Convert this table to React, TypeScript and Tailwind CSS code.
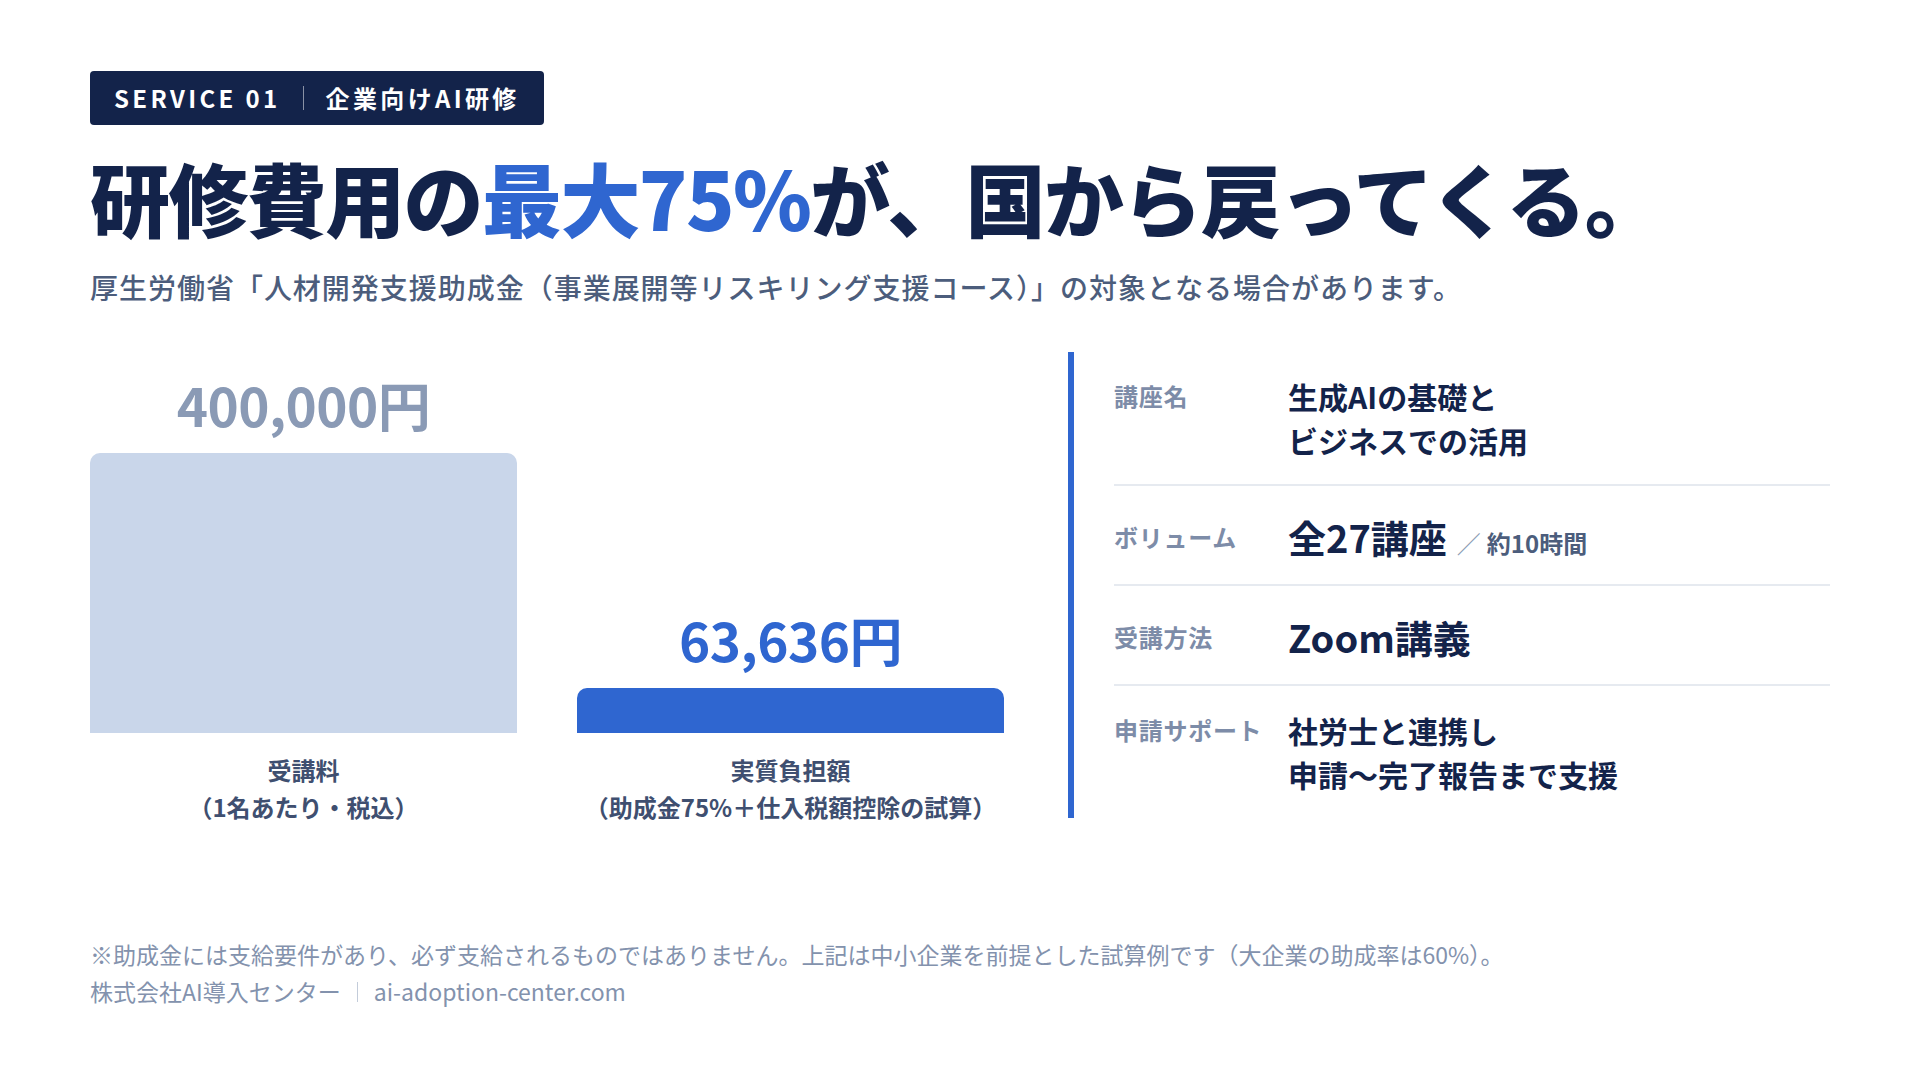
const font = { fontFamily: '"Noto Sans CJK JP", "Noto Sans", sans-serif' };

const rows = [
  { label: '講座名', big: false, value: <>生成AIの基礎と<br />ビジネスでの活用</> },
  {
    label: 'ボリューム',
    big: true,
    value: (
      <>
        全27講座
        <span className="ml-[10px] mr-[6px] text-[24px] leading-none font-normal text-[#8a99b3]">／</span>
        <span className="text-[24px] leading-none text-[#4c5d7c]">約10時間</span>
      </>
    ),
  },
  { label: '受講方法', big: true, value: <>Zoom講義</> },
  { label: '申請サポート', big: false, value: <>社労士と連携し<br />申請〜完了報告まで支援</> },
];

function Bar({ amount, amountClass, barClass, height, label, sub }: {
  amount: string; amountClass: string; barClass: string; height: string; label: string; sub: string;
}) {
  return (
    <div className="flex w-[427px] flex-col items-center">
      <div className={`mb-4 text-[53px] font-bold leading-[1.2] tracking-[-0.01em] ${amountClass}`}>{amount}</div>
      <div className={`w-full rounded-t-[10px] ${barClass} ${height}`} />
      <div className="mt-[18px] text-center text-[24px] font-bold leading-[37px] text-[#3f4f70]">
        <div>{label}</div>
        <div>{sub}</div>
      </div>
    </div>
  );
}

export default function App() {
  return (
    <div style={font} className="flex min-h-screen flex-col bg-white px-[90px] pt-[71px] pb-[70px] text-[#13234a]">
      <div className="flex h-[54px] w-fit items-center rounded-[4px] bg-[#13234a] px-[24px] text-[24px] font-bold tracking-[0.14em] text-white">
        <span>SERVICE 01</span>
        <span className="mx-[22px] h-[24px] w-px bg-white/50" />
        <span>企業向けAI研修</span>
      </div>

      <h1 className="mt-[21px] text-[80px] font-black leading-[100px] tracking-[-0.02em]">
        研修費用の<span className="text-[#2f66d0]">最大75%</span>が、国から戻ってくる。
      </h1>
      <p className="mt-[20px] text-[28px] font-medium leading-[42px] tracking-[0.035em] text-[#4c5d7c]">
        厚生労働省「人材開発支援助成金（事業展開等リスキリング支援コース）」の対象となる場合があります。
      </p>

      <div className="mt-[44px] flex items-start gap-[64px]">
        <div className="flex w-[914px] shrink-0 items-end gap-[60px] pt-[21px]">
          <Bar amount="400,000円" amountClass="text-[#8a9ab5]" barClass="bg-[#c9d6ea]" height="h-[280px]" label="受講料" sub="（1名あたり・税込）" />
          <Bar amount="63,636円" amountClass="text-[#2f66d0]" barClass="bg-[#2f66d0]" height="h-[45px]" label="実質負担額" sub="（助成金75%＋仕入税額控除の試算）" />
        </div>

        <div className="flex-1 border-l-[6px] border-[#2f66d0] pl-[40px]">
          {rows.map((r, i) => (
            <div
              key={r.label}
              className={`flex items-start ${r.big ? 'pt-[24px] pb-[20px]' : 'py-[22px]'} ${i < rows.length - 1 ? 'border-b-2 border-[#e6eaf0]' : ''}`}
            >
              <div className={`w-[174px] shrink-0 text-[24px] font-bold tracking-[0.03em] text-[#7d8ca8] ${r.big ? 'leading-[54px]' : 'leading-[44px]'}`}>
                {r.label}
              </div>
              <div className={`font-bold ${r.big ? 'text-[38px] leading-[54px]' : 'text-[30px] leading-[44px]'}`}>{r.value}</div>
            </div>
          ))}
        </div>
      </div>

      <div className="mt-auto text-[23px] leading-[37px] text-[#8392ad]">
        <p>※助成金には支給要件があり、必ず支給されるものではありません。上記は中小企業を前提とした試算例です（大企業の助成率は60%）。</p>
        <p className="flex items-center">
          株式会社AI導入センター
          <span className="mx-[16px] h-[20px] w-px bg-[#c3ccda]" />
          ai-adoption-center.com
        </p>
      </div>
    </div>
  );
}
